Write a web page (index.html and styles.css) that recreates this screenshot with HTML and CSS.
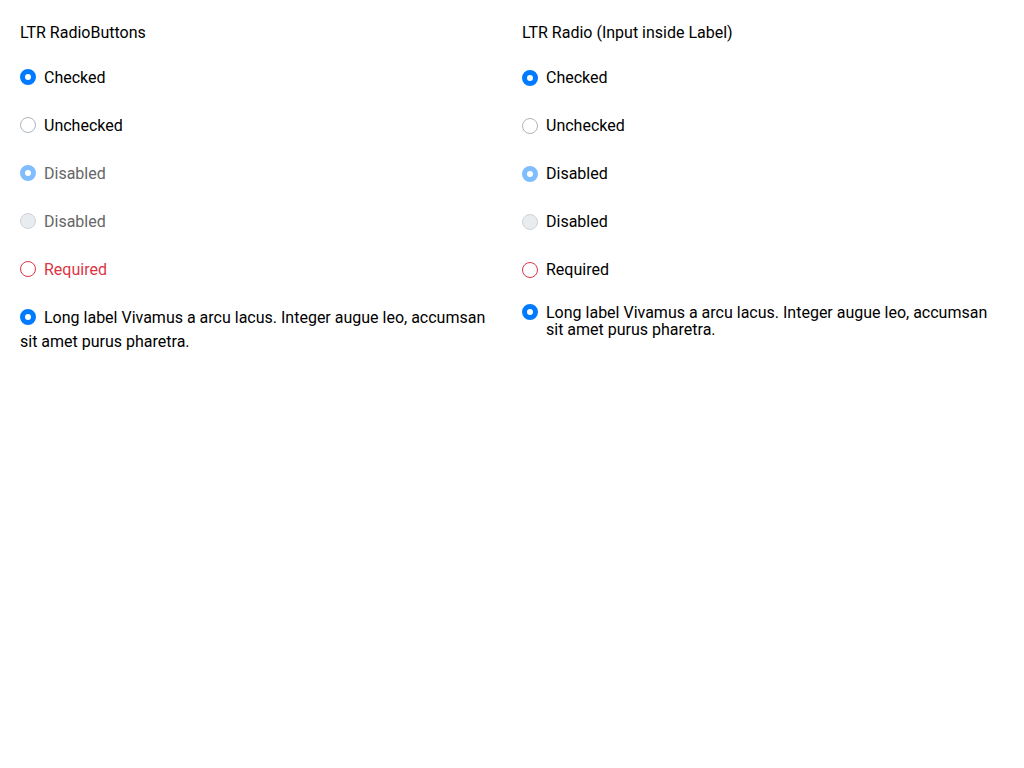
FILE: index.html
```html
<!DOCTYPE html>
<html lang="en">
<head>
<meta charset="utf-8">
<title>Radio Buttons</title>
<link rel="stylesheet" href="styles.css">
</head>
<body>
<div class="page">
  <section class="col">
    <h2 class="title">LTR RadioButtons</h2>
    <div class="row"><input type="radio" class="radio" name="a1" checked><label class="lbl">Checked</label></div>
    <div class="row"><input type="radio" class="radio" name="a2"><label class="lbl">Unchecked</label></div>
    <div class="row"><input type="radio" class="radio" name="a3" checked disabled><label class="lbl muted">Disabled</label></div>
    <div class="row"><input type="radio" class="radio" name="a4" disabled><label class="lbl muted">Disabled</label></div>
    <div class="row"><input type="radio" class="radio invalid" name="a5"><label class="lbl error">Required</label></div>
    <div class="row long"><input type="radio" class="radio" name="a6" checked><label class="lbl">Long label Vivamus a arcu lacus. Integer augue leo, accumsan sit amet purus pharetra.</label></div>
  </section>
  <section class="col">
    <h2 class="title">LTR Radio (Input inside Label)</h2>
    <label class="row flexrow"><input type="radio" class="radio" name="b1" checked><span>Checked</span></label>
    <label class="row flexrow"><input type="radio" class="radio" name="b2"><span>Unchecked</span></label>
    <label class="row flexrow"><input type="radio" class="radio" name="b3" checked disabled><span>Disabled</span></label>
    <label class="row flexrow"><input type="radio" class="radio" name="b4" disabled><span>Disabled</span></label>
    <label class="row flexrow"><input type="radio" class="radio invalid" name="b5"><span>Required</span></label>
    <label class="row flexrow longflex"><input type="radio" class="radio" name="b6" checked><span class="longtext">Long label Vivamus a arcu lacus. Integer augue leo, accumsan sit amet purus pharetra.</span></label>
  </section>
</div>
</body>
</html>
```

FILE: styles.css
```css
html, body {
  margin: 0;
  padding: 0;
  background: #fff;
}
body {
  font-family: Roboto, "Liberation Sans", Arial, sans-serif;
  font-size: 16px;
  color: #000;
}
.page {
  display: grid;
  grid-template-columns: 1fr 1fr;
  column-gap: 20px;
  padding: 21px 20px 20px;
}
.col {
  display: flex;
  flex-direction: column;
  gap: 24px;
}
.title {
  font-size: 16px;
  font-weight: 400;
  line-height: 24px;
  margin: 0 0 -3px 0;
}
.row {
  line-height: 24px;
  min-height: 24px;
}
.radio {
  appearance: none;
  -webkit-appearance: none;
  width: 16px;
  height: 16px;
  margin: 0 8px 0 0;
  border-radius: 50%;
  border: 1px solid #adb5bd;
  background: #fff;
  box-sizing: border-box;
  vertical-align: -2px;
  flex: none;
}
.radio:checked {
  background: #fff;
  border: 5px solid #007bff;
}
.radio:disabled {
  background: #e9ecef;
  border-color: #cfd4d9;
}
.radio:checked:disabled {
  background: #fff;
  border: 5px solid #80bdff;
}
.radio.invalid {
  border-color: #dc3545;
}
.lbl.muted {
  color: #666;
}
.lbl.error {
  color: #dc3545;
}
.flexrow {
  display: flex;
  align-items: center;
}
.longflex {
  align-items: flex-start;
  line-height: 17px;
  margin-top: -2px;
}
```
